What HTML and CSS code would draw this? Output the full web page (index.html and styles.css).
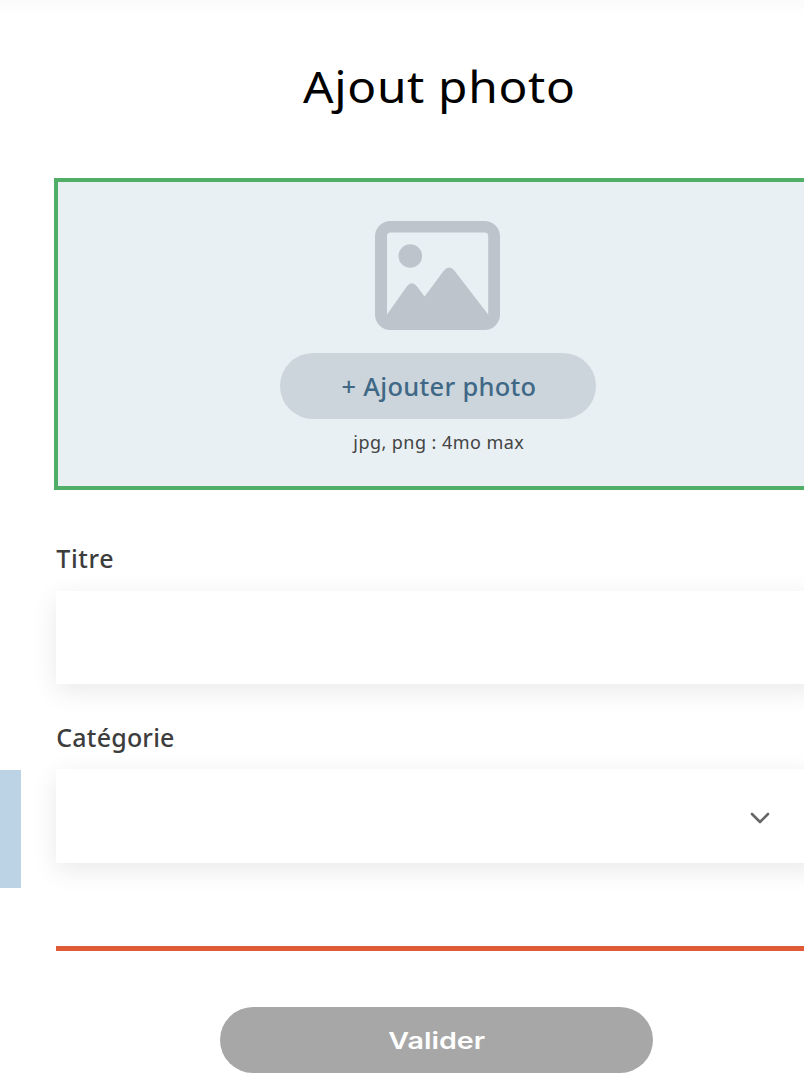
FILE: index.html
```html
<!DOCTYPE html>
<html lang="fr">
<head>
<meta charset="utf-8">
<title>Ajout photo</title>
<link rel="stylesheet" href="styles.css">
</head>
<body>
<div class="page">
  <div class="backdrop"></div>
  <form class="modal">
    <h1 class="title"><span>Ajout photo</span></h1>
    <div class="upload">
      <svg class="picture" viewBox="0 0 125 109" aria-hidden="true">
        <path fill="#bdc4cc" fill-rule="evenodd" d="M15.500 0H109.500A15.500 15.500 0 0 1 125 15.500V93.500A15.500 15.500 0 0 1 109.500 109H15.500A15.500 15.500 0 0 1 0 93.500V15.500A15.500 15.500 0 0 1 15.500 0ZM15.500 11.500Q12 11.500 12 15V93.500L31.800 65.500Q36.900 58.800 42 65.500L49.600 75.500L69 49.500Q74 43.500 79.300 49.500L113.200 93.500V15Q113.200 11.500 109.700 11.500Z"/>
        <circle cx="35.300" cy="35" r="11.800" fill="#bdc4cc"/>
      </svg>
      <button class="add" type="button"><span>+ Ajouter photo</span></button>
      <p class="hint"><span>jpg, png : 4mo max</span></p>
    </div>
    <label class="label label-title"><span>Titre</span></label>
    <div class="field"></div>
    <label class="label label-category"><span class="narrow">Catégorie</span></label>
    <div class="field select">
      <svg class="chevron" viewBox="0 0 20 12" aria-hidden="true"><path d="M2 2L10 10L18 2" fill="none" stroke="#666" stroke-width="2.600" stroke-linecap="round" stroke-linejoin="round"/></svg>
    </div>
    <div class="rule"></div>
    <button class="submit" type="button"><span>Valider</span></button>
  </form>
</div>
</body>
</html>
```
FILE: styles.css
```css
* { box-sizing: border-box; }
body { margin: 0; background: #fff; }
.page {
  width: 804px;
  height: 1078px;
  overflow: hidden;
  display: grid;
  grid-template-columns: 21.4px 768px;
  column-gap: 32.4px;
  background: linear-gradient(#fbfbfb, #fefefe 12px, #fff 20px);
  font-family: "Noto Sans", sans-serif;
}
.backdrop { height: 118.6px; margin-top: 769.6px; background: #bcd3e6; }
.modal { display: flex; flex-direction: column; }
.title {
  margin: 57px 0 0;
  height: 60px;
  padding-left: 4px;
  text-align: center;
  font-size: 44px;
  line-height: 59px;
  font-weight: 400;
  letter-spacing: .6px;
  color: #000;
}
.title span { display: inline-block; transform: scaleX(1.087); }
.upload {
  margin-top: 60.6px;
  height: 312.6px;
  border: 4.4px solid #50ae66;
  background: #e8f0f4;
  display: flex;
  flex-direction: column;
  align-items: center;
  padding-top: 39.3px;
}
.picture { width: 125px; height: 109px; flex: none; }
.add {
  flex: none;
  width: 316px;
  height: 66px;
  margin-top: 23.4px;
  border: 0;
  border-radius: 33px;
  background: #ccd5db;
  color: #3f6887;
  font: 500 24.500px/66px "Noto Sans", sans-serif;
  letter-spacing: .3px;
  padding: 1px 0 0 2px;
}
.add span { display: inline-block; transform: scaleX(1.037); }
.hint {
  margin: 10px 0 0;
  padding-left: 2px;
  font-size: 18px;
  line-height: 27px;
  letter-spacing: .45px;
  color: #444;
}
.label {
  padding-left: 2.5px;
  height: 36px;
  font-size: 25px;
  line-height: 35px;
  font-weight: 500;
  letter-spacing: .6px;
  color: #3d3d3d;
}
.narrow { letter-spacing: .2px; }
.label-title { margin-top: 51px; }
.label-category { margin-top: 36px; }
.field {
  margin: 13.4px 0 0 2px;
  height: 93.5px;
  background: #fff;
  box-shadow: 0 7px 25px rgba(0, 0, 0, .09);
}
.select { display: flex; align-items: center; padding: 4px 0 0 694px; }
.chevron { width: 20px; height: 12px; }
.rule { margin: 83.2px 0 0 2px; height: 4.8px; background: #df5b38; flex: none; }
.submit {
  flex: none;
  width: 433px;
  height: 66px;
  margin: 56px 0 0 166.4px;
  border: 0;
  border-radius: 33px;
  background: #a7a7a7;
  color: #fff;
  font: 600 23.500px/68px Inter, sans-serif;
  padding: 0;
}
.submit span { display: inline-block; transform: scaleX(1.22); }
```
